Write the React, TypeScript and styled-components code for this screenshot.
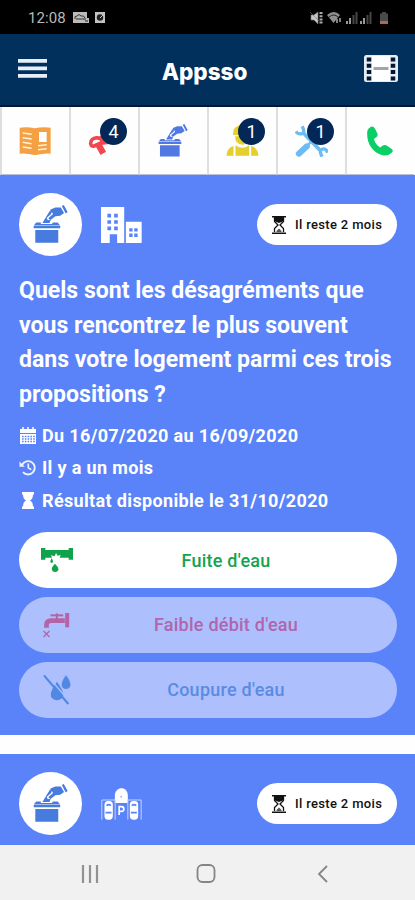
import React, { ReactNode } from "react";
import styled, { createGlobalStyle } from "styled-components";

const GlobalStyle = createGlobalStyle`
  * {
    box-sizing: border-box;
  }
  body {
    margin: 0;
    font-family: Roboto, "Liberation Sans", sans-serif;
    background-color: #fff;
  }
  svg {
    display: block;
    flex-shrink: 0;
  }
`;

const Screen = styled.div`
  width: 415px;
  height: 900px;
  display: flex;
  flex-direction: column;
  overflow: hidden;
  background-color: #fefefe;
`;

const StatusBar = styled.div`
  height: 34px;
  flex-shrink: 0;
  padding: 1px 26px 0 28px;
  display: flex;
  align-items: center;
  justify-content: space-between;
  background-color: #000;
  color: #b9b9b9;
`;

const StatusGroup = styled.div`
  display: flex;
  align-items: center;
  gap: 6px;
`;

const Clock = styled.span`
  font-size: 15px;
  letter-spacing: 0.1px;
  margin-right: 1px;
`;

const Header = styled.header`
  height: 73px;
  flex-shrink: 0;
  padding: 0 17px 3px 18px;
  display: flex;
  align-items: center;
  justify-content: space-between;
  background-color: #01305c;
  border-bottom: 2px solid #021638;
`;

const AppName = styled.h1`
  margin: 6px 2px 0 0;
  color: #fff;
  font-family: Inter, sans-serif;
  font-size: 22.5px;
  font-weight: 800;
`;

const Tabs = styled.nav`
  height: 68px;
  flex-shrink: 0;
  display: flex;
  background-color: #fefefe;
`;

const Tab = styled.div`
  position: relative;
  width: 69px;
  flex-shrink: 0;
  padding-right: 1px;
  display: flex;
  align-items: center;
  justify-content: center;
  border-left: 2px solid #dedede;
  border-bottom: 1px solid #b9c0dc;
`;

const Badge = styled.span`
  position: absolute;
  top: 11px;
  left: 29px;
  width: 27px;
  height: 27px;
  border-radius: 50%;
  background-color: #032858;
  color: #fff;
  font-size: 18px;
  line-height: 28px;
  text-align: center;
`;

const Card = styled.section<{ $height: number }>`
  height: ${props => props.$height}px;
  flex-shrink: 0;
  padding: 18px 18px 0 19px;
  background-color: #5a83f9;
  color: #fff;
`;

const Gap = styled.div`
  height: 19px;
  flex-shrink: 0;
`;

const CardTop = styled.div`
  display: flex;
  align-items: center;
`;

const Round = styled.div`
  width: 63px;
  height: 63px;
  margin-right: 19px;
  border-radius: 50%;
  display: flex;
  align-items: center;
  justify-content: center;
  background-color: #fff;
  color: #477bde;
`;

const Remaining = styled.div`
  width: 140px;
  height: 41px;
  margin-left: auto;
  padding-left: 15px;
  border-radius: 21px;
  display: flex;
  align-items: center;
  gap: 9px;
  background-color: #fff;
  color: #111;
  font-size: 13px;
  font-weight: 500;
  letter-spacing: 0.33px;
  white-space: nowrap;
`;

const Question = styled.h2`
  margin: 18px 0 0;
  font-size: 23.05px;
  line-height: 34.6px;
  font-weight: 700;
  white-space: nowrap;
`;

const Meta = styled.div`
  height: 32.3px;
  display: flex;
  align-items: center;
  gap: 5px;
  font-size: 18px;
  font-weight: 700;
  letter-spacing: 0.35px;
  white-space: nowrap;
`;

const MetaIcon = styled.span`
  width: 18px;
  display: flex;
  justify-content: center;
`;

const MetaList = styled.div`
  margin-top: 7px;
`;

const Options = styled.div`
  margin-top: 16px;
  display: flex;
  flex-direction: column;
  gap: 8.7px;
`;

const Option = styled.div<{ $color: string; $dimmed?: boolean }>`
  height: 56px;
  padding: 0 20px;
  border-radius: 28px;
  display: flex;
  align-items: center;
  background-color: ${props => (props.$dimmed ? "#adc0fd" : "#fff")};
  color: ${props => props.$color};
  font-size: 18px;
  font-weight: 500;
  letter-spacing: 0.25px;
`;

const OptionIcon = styled.span`
  width: 36px;
  padding-right: 1px;
  display: flex;
  justify-content: center;
`;

const OptionLabel = styled.span`
  flex: 1;
  text-align: center;
  white-space: nowrap;
`;

const SystemNav = styled.div`
  flex: 1;
  padding: 2px 87px 0 81px;
  display: flex;
  align-items: center;
  justify-content: space-between;
  background-color: #f1f1f1;
`;

const HomeButton = styled.span`
  margin-right: 4px;
`;

const BallotIcon = ({ width }: { width: number }) => (
  <svg width={width} height={width * 1.1} viewBox="96 74 108 119" fill="currentColor">
    <path d="M185 77l6-3 12 22-6 4z" />
    <path d="M150 88l15-6 17 0 10 17-12 8-15 2-15 11-7-5 15-13-3-5-7 2z" />
    <path d="M148 92l5 9-15 13 4 7 9-2-4 11h-22z" />
    <path d="M106 128h14v5h34l4-5h14l8 9H98zM98 139h82v7H98zM103 151h71v40h-71z" />
  </svg>
);

const BuildingsIcon = () => (
  <svg width="41" height="36" viewBox="303 81 122 107" fill="#fff" fillRule="evenodd">
    <path d="M303 81h69v107h-21v-26h-22v26h-26zM322 101v11h11v-11zm20 0v11h11v-11zm-20 19v11h11v-11zm20 0v11h11v-11zm-20 19v11h11v-11zm20 0v11h11v-11zM377 125h47v63h-47zM387 144v10h10v-10zm15 0v10h10v-10zm-15 16v10h10v-10zm15 0v10h10v-10z" />
  </svg>
);

const ParkingIcon = () => (
  <svg width="41" height="32" viewBox="303 127 122 96" fill="#fff">
    <path d="M344 172v-22c0-29 39-31 39 0v22z" />
    <path
      d="M305 222v-59h40v59M383 222v-59h40v59"
      fill="none"
      stroke="#c3d2fd"
      strokeWidth="3"
    />
    <rect x="313" y="166" width="25" height="56" rx="11" />
    <rect x="389" y="166" width="25" height="56" rx="11" />
    <path
      d="M319 180q7-6 13 0M395 180q7-6 13 0M316 201h18M392 201h18"
      fill="none"
      stroke="#5a83f9"
      strokeWidth="5"
    />
    <circle cx="363" cy="153" r="2.5" fill="#8facfb" />
    <path
      d="M357 208v-25h7q7 0 7 7t-7 7h-7"
      fill="none"
      stroke="#fff"
      strokeWidth="5"
    />
  </svg>
);

const HourglassIcon = () => (
  <svg width="14" height="18" viewBox="0 0 14 18">
    <path d="M0 0h14v1.500H0zM0 16.500h14V18H0zM2 1h10v4L7 7 2 5z" fill="#111" />
    <path
      d="M2.500 2v3.500L6 9l-3.500 3.500V16M11.500 2v3.500L8 9l3.500 3.500V16"
      fill="none"
      stroke="#111"
      strokeWidth="1.300"
    />
    <path d="M4.500 15L7 12.500 9.500 15v1h-5z" fill="#555" />
  </svg>
);

const SolidHourglass = () => (
  <svg width="12" height="17" viewBox="0 0 12 17" fill="#fff">
    <path d="M0 0h12v2.500h-1c0 3-1 5-3 6 2 1 3 3 3 6h1V17H0v-2.500h1c0-3 1-5 3-6-2-1-3-3-3-6H0z" />
  </svg>
);

const CalendarIcon = () => (
  <svg width="18" height="17" viewBox="0 0 18 17">
    <path d="M1 2h16v4H1zM1 7h16v10H1z" fill="#fff" />
    <path d="M4 0v4M9 0v4M14 0v4" stroke="#fff" strokeWidth="1.500" />
    <path
      d="M3 9.500h13M3 12h13M3 14.500h13"
      stroke="#5a83f9"
      strokeWidth="1.300"
      strokeDasharray="1.600 1.200"
    />
  </svg>
);

const HistoryIcon = () => (
  <svg width="18" height="17" viewBox="0 0 18 17" fill="none" stroke="#eef3ff" strokeWidth="1.900">
    <path d="M3 6a6.700 6.700 0 1 1 1 7.200" />
    <path d="M9.300 4.500v4.300l3 1.800" strokeWidth="1.600" />
    <path d="M.5 2.500v5.300h5.300z" fill="#eef3ff" stroke="none" />
  </svg>
);

const NewspaperIcon = () => (
  <svg width="32" height="28" viewBox="57 80 96 84">
    <path
      d="M59 82q23-4 45 2 24-6 48-2v78q-22-2-44 4h-6q-22-6-43-4z"
      fill="#f4a044"
    />
    <rect x="117" y="95" width="23" height="30" fill="#fff" />
    <path
      d="M68 98l27 4M68 112l27 4M68 126l27 4M68 140l27 4M114 136l26-3M114 148l26-3"
      stroke="#fff3df"
      strokeWidth="4.500"
    />
  </svg>
);

const MegaphoneIcon = () => (
  <svg width="33" height="30" viewBox="263 82 99 90" fill="none" stroke="#f2474e">
    <path d="M271 134c0-20 32-22 37-4l-26 12q-10 2-11-8z" strokeWidth="11" />
    <path d="M300 115l36-23 20 38-52 6z" fill="#f2474e" strokeWidth="5" />
    <path d="M294 138l15 26" strokeWidth="19" />
  </svg>
);

const WorkerIcon = () => (
  <svg width="33" height="31" viewBox="57 80 98 93" fill="#e4cf2c">
    <path d="M78 105q0-24 28-24t28 24v5H78z" />
    <path d="M84 114h45q0 25-23 25T84 114z" />
    <path d="M85 141q21 15 41 0v31H85zM79 143v29H58q1-24 21-29zM132 143v29h22q-2-24-22-29z" />
  </svg>
);

const ToolsIcon = () => (
  <svg width="33" height="32" viewBox="265 75 98 96" fill="none" stroke="#6bbcf3">
    <path d="M287 96l54 56" strokeWidth="11" />
    <path d="M286 79q10 19-1 22t-18-7M346 170q-11-17 0-22t16 10" strokeWidth="10" />
    <path d="M276 161l24-22" strokeWidth="18" strokeLinecap="round" />
    <path d="M302 136l47-47" strokeWidth="7" />
    <path d="M343 88l13-8" strokeWidth="12" />
  </svg>
);

const PhoneIcon = () => (
  <svg width="26" height="30" viewBox="482 79 79 90" fill="#09cf65">
    <path d="M483 93q2-8 12-13 7-1 11 6l8 16q2 7-5 11l-6 5q4 16 19 26l8-6q6-4 12 0l16 11q5 5-1 11-10 10-24 8-22-3-38-24-15-21-12-51z" />
  </svg>
);

const LeakIcon = () => (
  <svg width="32" height="24" viewBox="119 84 96 72" fill="#11a34c">
    <path d="M119 84h13v6h70v-6h13v35h-13v-6h-27l3-8-9 2-5-8-4 10-11-3 3 7h-20v6h-13z" />
    <path d="M161 131q14 14 9 21-9 8-17 0-6-7 8-21zM151 115q8 12 0 14-8-2 0-14z" />
  </svg>
);

const TapIcon = () => (
  <svg width="27" height="26" viewBox="132 276 80 78" fill="none" stroke="#b364a7">
    <path d="M142 323v-8q0-13 14-13h41" strokeWidth="14" />
    <path d="M204 279v43" strokeWidth="12" />
    <path d="M173 280v18" strokeWidth="6" />
    <path d="M154 286h38" strokeWidth="6" />
    <path d="M133 333l18 18M151 333l-18 18" strokeWidth="4" />
  </svg>
);

const NoWaterIcon = () => (
  <svg width="28" height="31" viewBox="126 145 84 93">
    <path
      d="M168 168q28 39 15 50-15 12-30 0-12-14 15-50zM195 149q20 25 10 37-10 8-20 0-9-12 10-37z"
      fill="#5088e4"
    />
    <path d="M136 146l73 86" stroke="#adc0fd" strokeWidth="4" />
    <path d="M129 149l73 86" stroke="#5088e4" strokeWidth="6.500" />
  </svg>
);

const MenuIcon = () => (
  <svg width="29" height="19" viewBox="0 0 29 19" fill="#e8effb">
    <path d="M0 0h29v3.700H0zM0 7.500h29v3.700H0zM0 15h29v3.700H0z" />
  </svg>
);

const FilmIcon = () => (
  <svg width="34" height="27" viewBox="0 0 34 27">
    <rect width="34" height="27" rx="2.500" fill="#e4edf5" />
    <rect x="8" y="1" width="18" height="25" fill="#fff" />
    <path
      d="M5 2.500v23M29 2.500v23"
      stroke="#06152e"
      strokeWidth="4.500"
      strokeDasharray="4 2.300"
    />
    <path d="M9.500 13.500h15" stroke="#a1a5aa" strokeWidth="3" />
  </svg>
);

const NotificationIcons = () => (
  <svg width="33" height="13" viewBox="0 0 33 13">
    <path d="M0 1h14v6h2v5H0z" fill="#bababa" />
    <path d="M2 8q-1-3 2-3 2-3 4 0 3-1 4 2M3 8h7" stroke="#333" fill="none" />
    <path d="M10 8h3M12 10h3" stroke="#222" />
    <rect x="22" y="1" width="10" height="11" fill="#c2c2c2" />
    <circle cx="27" cy="6.500" r="3.200" fill="#202020" />
    <path d="M27 7l3-3" stroke="#c2c2c2" />
  </svg>
);

const SignalIcons = () => (
  <svg width="79" height="14" viewBox="0 0 79 14">
    <path d="M1 4h3l4-3v12L4 9H1zM0 1l9 9" fill="#c6c6c6" stroke="#777" strokeWidth=".6" />
    <path d="M11 1v12" stroke="#aaa" strokeWidth="3" strokeDasharray="2 1.200" />
    <path d="M17 4q7-6 13 0l-6.500 8z" fill="#8e8e8e" />
    <path d="M19 6q5-4 9 0" stroke="#222" fill="none" />
    <path d="M27 8v4M30 7v4" stroke="#aaa" strokeWidth="1.500" />
    <path d="M37 10v3M40 7v6M51 10v3M54 7v6" stroke="#999" strokeWidth="2" />
    <path d="M43.500 4v9M46.500 1v12M57.500 4v9M60.500 1v12" stroke="#464646" strokeWidth="2" />
    <path d="M72 1h4v1.500h2V13h-8V2.500h2z" fill="#4a4a4a" />
    <path d="M70 10h8v3h-8z" fill="#b96642" />
  </svg>
);

interface ITab {
  icon: ReactNode;
  count?: number;
}

const tabs: ITab[] = [
  { icon: <NewspaperIcon /> },
  { icon: <MegaphoneIcon />, count: 4 },
  { icon: <BallotIcon width={30} /> },
  { icon: <WorkerIcon />, count: 1 },
  { icon: <ToolsIcon />, count: 1 },
  { icon: <PhoneIcon /> }
];

const CardHeader = ({ children }: { children: ReactNode }) => (
  <CardTop>
    <Round>
      <BallotIcon width={35} />
    </Round>
    {children}
    <Remaining>
      <HourglassIcon />
      Il reste 2 mois
    </Remaining>
  </CardTop>
);

const TabIcon = styled.span`
  color: #5178e3;
`;

const App = () => {
  return (
    <Screen>
      <GlobalStyle />
      <StatusBar>
        <StatusGroup>
          <Clock>12:08</Clock>
          <NotificationIcons />
        </StatusGroup>
        <SignalIcons />
      </StatusBar>
      <Header>
        <MenuIcon />
        <AppName>Appsso</AppName>
        <FilmIcon />
      </Header>
      <Tabs>
        {tabs.map((tab, index) => (
          <Tab key={index}>
            <TabIcon>{tab.icon}</TabIcon>
            {tab.count && <Badge>{tab.count}</Badge>}
          </Tab>
        ))}
      </Tabs>
      <Card $height={560}>
        <CardHeader>
          <BuildingsIcon />
        </CardHeader>
        <Question>
          Quels sont les désagréments que
          <br />
          vous rencontrez le plus souvent
          <br />
          dans votre logement parmi ces trois
          <br />
          propositions ?
        </Question>
        <MetaList>
          <Meta>
            <MetaIcon>
              <CalendarIcon />
            </MetaIcon>
            Du 16/07/2020 au 16/09/2020
          </Meta>
          <Meta>
            <MetaIcon>
              <HistoryIcon />
            </MetaIcon>
            Il y a un mois
          </Meta>
          <Meta>
            <MetaIcon>
              <SolidHourglass />
            </MetaIcon>
            Résultat disponible le 31/10/2020
          </Meta>
        </MetaList>
        <Options>
          <Option $color="#16a350">
            <OptionIcon>
              <LeakIcon />
            </OptionIcon>
            <OptionLabel>Fuite d'eau</OptionLabel>
          </Option>
          <Option $color="#b065ad" $dimmed>
            <OptionIcon>
              <TapIcon />
            </OptionIcon>
            <OptionLabel>Faible débit d'eau</OptionLabel>
          </Option>
          <Option $color="#5b8be0" $dimmed>
            <OptionIcon>
              <NoWaterIcon />
            </OptionIcon>
            <OptionLabel>Coupure d'eau</OptionLabel>
          </Option>
        </Options>
      </Card>
      <Gap />
      <Card $height={91}>
        <CardHeader>
          <ParkingIcon />
        </CardHeader>
      </Card>
      <SystemNav>
        <svg width="18" height="18" viewBox="0 0 18 18" stroke="#929292" strokeWidth="2.200">
          <path d="M2 0v18M9 0v18M16 0v18" />
        </svg>
        <HomeButton>
          <svg width="20" height="19" viewBox="0 0 20 19" fill="none" stroke="#858585" strokeWidth="1.800">
            <rect x="1.500" y="1" width="17" height="17" rx="5" />
          </svg>
        </HomeButton>
        <svg width="11" height="18" viewBox="0 0 11 18" fill="none" stroke="#858585" strokeWidth="1.800">
          <path d="M10 1L2 9l8 8" />
        </svg>
      </SystemNav>
    </Screen>
  );
};

export default App;
